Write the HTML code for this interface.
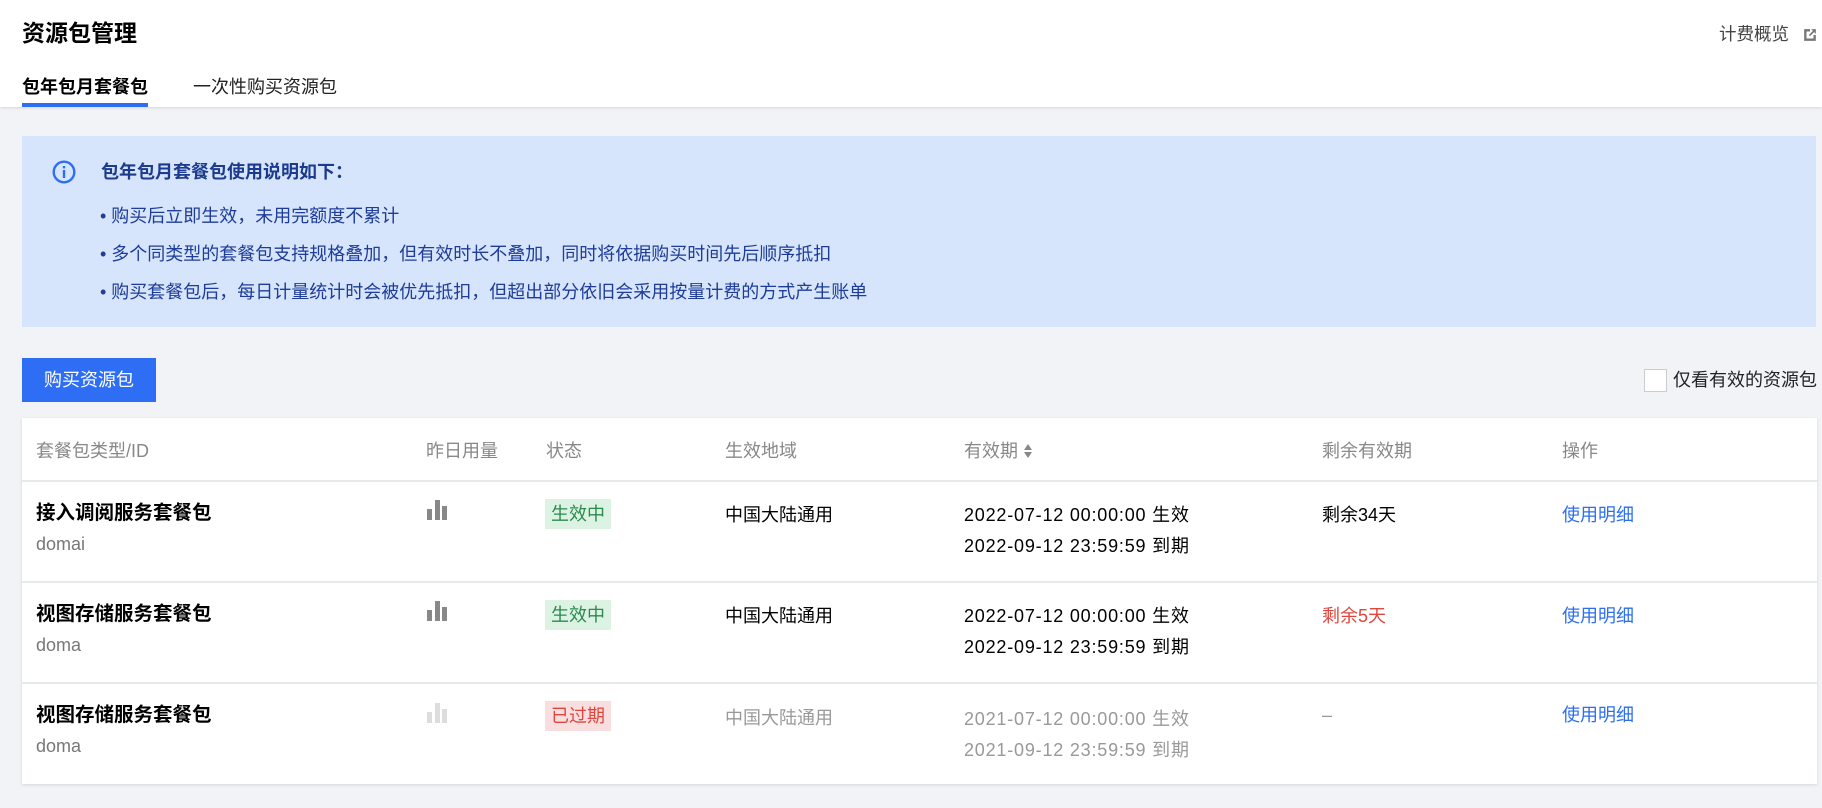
<!DOCTYPE html>
<html><head><meta charset="utf-8"><style>
*{margin:0;padding:0;box-sizing:border-box}
body{width:1822px;height:808px;background:#f2f3f7;font-family:"Liberation Sans","Noto Sans CJK SC",sans-serif;position:relative;overflow:hidden;color:#000}
.a{position:absolute;white-space:nowrap}
.hdr{position:absolute;left:0;top:0;width:1822px;height:107px;background:#fff;box-shadow:0 1px 3px rgba(0,0,0,.12)}
.info{position:absolute;left:22px;top:136px;width:1794px;height:191px;background:#d6e5fb}
.card{position:absolute;left:22px;top:418px;width:1795px;height:366px;background:#fff;box-shadow:0 1px 3px rgba(0,0,0,.12)}
.line{position:absolute;left:22px;width:1795px;height:2px;background:#e8e9ec}
.th{color:#888;font-size:18px}
.t{font-size:18px;color:#000}
.d{letter-spacing:0.8px}
.g{color:#999}
.tag{position:absolute;width:66px;height:30px;font-size:18px;line-height:30px;text-align:center}
.link{color:#2c6ef2;font-size:18px}
</style></head><body>
<div class="hdr"></div>
<div class="a" style="left:22px;top:18px;font-size:23px;font-weight:600;line-height:30px">资源包管理</div>
<div class="a" style="left:1719px;top:22px;font-size:17.5px;color:#444;line-height:24px">计费概览</div>
<svg class="a" style="left:1803px;top:28px" width="14" height="14" viewBox="0 0 12 12"><path d="M1 1h5v2H3v6h6V6h2v5H1z" fill="#777"/><path d="M7 1h4v4L9.5 3.5 6 7 5 6 8.5 2.5z" fill="#777"/></svg>
<div class="a" style="left:22px;top:75px;font-size:18px;font-weight:bold;line-height:24px">包年包月套餐包</div>
<div style="position:absolute;left:22px;top:103px;width:126px;height:4px;background:#2e6ef5"></div>
<div class="a" style="left:193px;top:75px;font-size:18px;line-height:24px;color:#222">一次性购买资源包</div>

<div class="info"></div>
<svg class="a" style="left:52px;top:160px" width="24" height="24" viewBox="0 0 24 24"><circle cx="12" cy="12" r="10.3" fill="none" stroke="#2e6ef5" stroke-width="2.4"/><rect x="10.8" y="10" width="2.4" height="8" fill="#2e6ef5"/><rect x="10.8" y="6" width="2.4" height="2.4" fill="#2e6ef5"/></svg>
<div class="a" style="left:101px;top:160px;font-size:18px;font-weight:bold;color:#1c3a8e;line-height:24px">包年包月套餐包使用说明如下：</div>
<div class="a" style="left:100px;top:204px;font-size:18px;color:#1e3c98;line-height:24px">• 购买后立即生效，未用完额度不累计</div>
<div class="a" style="left:100px;top:242px;font-size:18px;color:#1e3c98;line-height:24px">• 多个同类型的套餐包支持规格叠加，但有效时长不叠加，同时将依据购买时间先后顺序抵扣</div>
<div class="a" style="left:100px;top:280px;font-size:18px;color:#1e3c98;line-height:24px">• 购买套餐包后，每日计量统计时会被优先抵扣，但超出部分依旧会采用按量计费的方式产生账单</div>

<div style="position:absolute;left:22px;top:358px;width:134px;height:44px;background:#2e6ef5;color:#fff;font-size:18px;line-height:44px;text-align:center">购买资源包</div>
<div style="position:absolute;left:1644px;top:369px;width:23px;height:23px;background:#fff;border:1px solid #ccc"></div>
<div class="a" style="left:1673px;top:368px;font-size:18px;line-height:24px;color:#222">仅看有效的资源包</div>

<div class="card"></div>
<div class="line" style="top:480px"></div>
<div class="line" style="top:581px"></div>
<div class="line" style="top:682px"></div>
<div class="a th" style="left:36px;top:437px">套餐包类型/ID</div>
<div class="a th" style="left:426px;top:437px">昨日用量</div>
<div class="a th" style="left:546px;top:437px">状态</div>
<div class="a th" style="left:725px;top:437px">生效地域</div>
<div class="a th" style="left:964px;top:437px">有效期 <svg width="10" height="16" viewBox="0 0 10 16" style="vertical-align:-2px"><path d="M5 1L9 7H1z M5 15L1 9h8z" fill="#888"/></svg></div>
<div class="a th" style="left:1322px;top:437px">剩余有效期</div>
<div class="a th" style="left:1562px;top:437px">操作</div>

<div class="a" style="left:36px;top:501px;font-size:19.5px;font-weight:bold;line-height:24px">接入调阅服务套餐包</div>
<div class="a" style="left:36px;top:532px;font-size:18px;color:#777;line-height:24px">domai</div>
<svg class="a" style="left:427px;top:500px" width="20" height="20"><rect x="0" y="9" width="5" height="11" fill="#888"/><rect x="8" y="0" width="5" height="20" fill="#888"/><rect x="15" y="6" width="5" height="14" fill="#888"/></svg>
<div class="tag" style="left:545px;top:499px;background:#dcf2e3;color:#2b8a4c">生效中</div>
<div class="a t" style="left:725px;top:501px">中国大陆通用</div>
<div class="a t d" style="left:964px;top:501px">2022-07-12 00:00:00 生效</div>
<div class="a t d" style="left:964px;top:532px">2022-09-12 23:59:59 到期</div>
<div class="a t" style="left:1322px;top:501px">剩余34天</div>
<div class="a link" style="left:1562px;top:501px">使用明细</div>

<div class="a" style="left:36px;top:602px;font-size:19.5px;font-weight:bold;line-height:24px">视图存储服务套餐包</div>
<div class="a" style="left:36px;top:633px;font-size:18px;color:#777;line-height:24px">doma</div>
<svg class="a" style="left:427px;top:601px" width="20" height="20"><rect x="0" y="9" width="5" height="11" fill="#888"/><rect x="8" y="0" width="5" height="20" fill="#888"/><rect x="15" y="6" width="5" height="14" fill="#888"/></svg>
<div class="tag" style="left:545px;top:600px;background:#dcf2e3;color:#2b8a4c">生效中</div>
<div class="a t" style="left:725px;top:602px">中国大陆通用</div>
<div class="a t d" style="left:964px;top:602px">2022-07-12 00:00:00 生效</div>
<div class="a t d" style="left:964px;top:633px">2022-09-12 23:59:59 到期</div>
<div class="a t" style="left:1322px;top:602px;color:#e0453e">剩余5天</div>
<div class="a link" style="left:1562px;top:602px">使用明细</div>

<div class="a" style="left:36px;top:703px;font-size:19.5px;font-weight:bold;line-height:24px">视图存储服务套餐包</div>
<div class="a" style="left:36px;top:734px;font-size:18px;color:#777;line-height:24px">doma</div>
<svg class="a" style="left:427px;top:703px" width="20" height="20"><rect x="0" y="9" width="5" height="11" fill="#ddd"/><rect x="8" y="0" width="5" height="20" fill="#ddd"/><rect x="15" y="6" width="5" height="14" fill="#ddd"/></svg>
<div class="tag" style="left:545px;top:701px;background:#f8dede;color:#e0453e">已过期</div>
<div class="a t g" style="left:725px;top:704px">中国大陆通用</div>
<div class="a t g d" style="left:964px;top:705px">2021-07-12 00:00:00 生效</div>
<div class="a t g d" style="left:964px;top:736px">2021-09-12 23:59:59 到期</div>
<div class="a t g" style="left:1322px;top:705px">–</div>
<div class="a link" style="left:1562px;top:701px">使用明细</div>
</body></html>
